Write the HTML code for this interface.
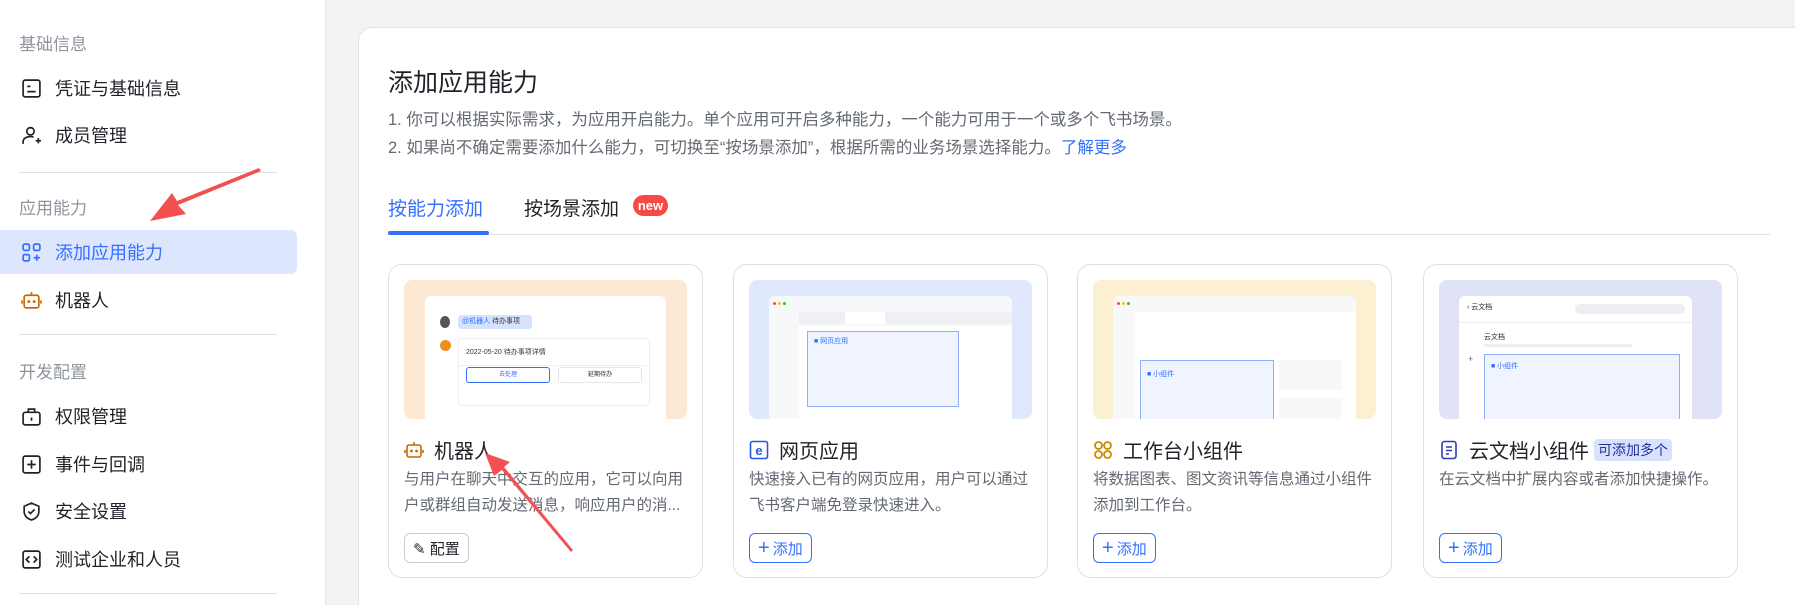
<!DOCTYPE html>
<html style="overflow:hidden;width:1795px;height:605px"><head><meta charset="utf-8"><style>
*{margin:0;padding:0;box-sizing:border-box}
body{width:1795px;height:605px;overflow:hidden;background:#f2f3f5;font-family:"Liberation Sans","Noto Sans CJK SC",sans-serif;position:relative;color:#1f2329}
.side{position:absolute;left:0;top:0;width:326px;height:605px;background:#fff;border-right:1px solid #e4e5e7}
.grp{position:absolute;left:19px;font-size:17px;color:#8f959e}
.item{position:absolute;left:0;width:297px;height:44px;display:flex;align-items:center;padding-left:21px;font-size:18px;color:#1f2329}
.item svg{width:21px;height:21px;margin-right:13px}
.item.act{background:#dde6fd;color:#3370ff;border-radius:0 6px 6px 0}
.div{position:absolute;left:19px;width:258px;height:1px;background:#dee0e3}
.main{position:absolute;left:358px;top:27px;width:1460px;height:600px;background:#fff;border:1px solid #e1e3e6;border-radius:14px}
.abs{position:absolute}
.card{position:absolute;top:264px;width:315px;height:314px;border:1px solid #dee0e3;border-radius:14px;background:#fff}
.img{position:absolute;left:15px;top:15px;width:283px;height:139px;border-radius:8px;overflow:hidden}
.ttl{position:absolute;left:15px;top:170px;font-size:20px;display:flex;align-items:center;white-space:nowrap}
.ttl svg{width:20px;height:20px;margin-right:10px}
.desc{position:absolute;left:15px;top:202px;width:286px;font-size:15.5px;line-height:25.5px;color:#646a73}
.btn{position:absolute;left:15px;top:268px;height:30px;padding:0 8px;border:1px solid #3370ff;border-radius:6px;color:#3370ff;font-size:15px;display:flex;align-items:center}
.btn b{font-weight:normal;font-size:20px;margin-right:3px;line-height:1}
.panel{position:absolute;background:#fff;border-radius:6px}
</style></head><body>
<div class="side">
<div class="grp" style="top:30px">基础信息</div>
<div class="item" style="top:66px"><svg viewBox="0 0 20 20" fill="none" stroke="#1f2329" stroke-width="1.6"><rect x="2" y="2" width="16" height="16" rx="2"/><path d="M6 8h3M6 13h8"/></svg>凭证与基础信息</div>
<div class="item" style="top:113px"><svg viewBox="0 0 20 20" fill="none" stroke="#1f2329" stroke-width="1.6"><circle cx="9" cy="6" r="3.5"/><path d="M2 18v-2c0-3 3-5 7-5 1 0 2 .2 3 .5M14 15h5M16.5 12.5v5"/></svg>成员管理</div>
<div class="div" style="top:172px"></div>
<div class="grp" style="top:194px">应用能力</div>
<div class="item act" style="top:230px"><svg viewBox="0 0 20 20" fill="none" stroke="#3370ff" stroke-width="1.6"><rect x="2" y="2" width="6" height="6" rx="1.5"/><rect x="12" y="2" width="6" height="6" rx="1.5"/><rect x="2" y="12" width="6" height="6" rx="1.5"/><path d="M12 15h6M15 12v6"/></svg>添加应用能力</div>
<div class="item" style="top:278px"><svg viewBox="0 0 20 20" fill="none" stroke="#c66a00" stroke-width="1.6"><rect x="3" y="5" width="14" height="12" rx="2"/><path d="M10 2v3M1 10v3M19 10v3"/><circle cx="7.5" cy="11" r=".6" fill="#c66a00"/><circle cx="12.5" cy="11" r=".6" fill="#c66a00"/></svg>机器人</div>
<div class="div" style="top:334px"></div>
<div class="grp" style="top:358px">开发配置</div>
<div class="item" style="top:394px"><svg viewBox="0 0 20 20" fill="none" stroke="#1f2329" stroke-width="1.6"><rect x="2" y="6" width="16" height="12" rx="2"/><path d="M7 6V3h6v3M10 11v3"/></svg>权限管理</div>
<div class="item" style="top:442px"><svg viewBox="0 0 20 20" fill="none" stroke="#1f2329" stroke-width="1.6"><rect x="2" y="2" width="16" height="16" rx="2"/><path d="M6 10h8M10 6v8"/></svg>事件与回调</div>
<div class="item" style="top:489px"><svg viewBox="0 0 20 20" fill="none" stroke="#1f2329" stroke-width="1.6"><path d="M10 2l7 3v5c0 4-3 7-7 8-4-1-7-4-7-8V5z"/><path d="M7 10l2 2 4-4"/></svg>安全设置</div>
<div class="item" style="top:537px"><svg viewBox="0 0 20 20" fill="none" stroke="#1f2329" stroke-width="1.6"><rect x="2" y="2" width="16" height="16" rx="2"/><path d="M8 7l-3 3 3 3M12 7l3 3-3 3"/></svg>测试企业和人员</div>
<div class="div" style="top:593px"></div>
</div>

<div class="main">
<div class="abs" style="left:29px;top:35px;font-size:25px">添加应用能力</div>
<div class="abs" style="left:29px;top:78px;font-size:16.5px;color:#646a73">1. 你可以根据实际需求，为应用开启能力。单个应用可开启多种能力，一个能力可用于一个或多个飞书场景。</div>
<div class="abs" style="left:29px;top:106px;font-size:16.5px;color:#646a73">2. 如果尚不确定需要添加什么能力，可切换至“按场景添加”，根据所需的业务场景选择能力。<span style="color:#3370ff">了解更多</span></div>
<div class="abs" style="left:29px;top:166px;font-size:19px;color:#3370ff">按能力添加</div>
<div class="abs" style="left:165px;top:166px;font-size:19px">按场景添加</div>
<div class="abs" style="left:274px;top:167px;width:35px;height:21px;background:#f54a45;color:#fff;border-radius:11px;font-size:13px;font-weight:bold;text-align:center;line-height:21px">new</div>
<div class="abs" style="left:29px;top:206px;width:1382px;height:1px;background:#dee0e3"></div>
<div class="abs" style="left:29px;top:203px;width:101px;height:4px;background:#3370ff;border-radius:2px"></div>
</div>

<!-- card 1 -->
<div class="card" style="left:388px">
<div class="img" style="background:#fde9d3">
<div class="panel" style="left:21px;top:16px;width:241px;height:130px;border-radius:6px 6px 0 0">
<div class="abs" style="left:15px;top:20px;width:10px;height:12px;border-radius:50%;background:#555"></div>
<div class="abs" style="left:33px;top:19px;width:74px;height:14px;background:#d5e2fb;border-radius:3px;font-size:7px;line-height:14px;padding-left:4px;color:#3370ff">@机器人 <span style="color:#333">待办事项</span></div>
<div class="abs" style="left:15px;top:44px;width:11px;height:11px;border-radius:50%;background:#f08c1a"></div>
<div class="abs" style="left:33px;top:42px;width:192px;height:68px;border:1px solid #eceef1;border-radius:4px">
<div style="font-size:7px;padding:8px 7px;color:#333;border-bottom:1px solid #eceef1">2022-05-20 待办事项详情</div>
<div class="abs" style="left:7px;top:28px;width:84px;height:16px;border:1px solid #3370ff;border-radius:3px;font-size:6px;color:#3370ff;text-align:center;line-height:14px">去处理</div>
<div class="abs" style="left:99px;top:28px;width:84px;height:16px;border:1px solid #e4e5e7;border-radius:3px;font-size:6px;text-align:center;line-height:14px">延期待办</div>
</div></div></div>
<div class="ttl"><svg viewBox="0 0 20 20" fill="none" stroke="#c66a00" stroke-width="1.6"><rect x="3" y="5" width="14" height="12" rx="2"/><path d="M10 2v3M1 10v3M19 10v3"/><circle cx="7.5" cy="11" r=".6" fill="#c66a00"/><circle cx="12.5" cy="11" r=".6" fill="#c66a00"/></svg>机器人</div>
<div class="desc">与用户在聊天中交互的应用，它可以向用户或群组自动发送消息，响应用户的消...</div>
<div class="btn" style="border-color:#c9cdd4;color:#1f2329">✎&nbsp;配置</div>
</div>

<!-- card 2 -->
<div class="card" style="left:733px">
<div class="img" style="background:#e0e8fd">
<div class="panel" style="left:20px;top:16px;width:243px;height:130px;background:#f7f8fa;border-radius:6px 6px 0 0">
<div class="abs" style="left:4px;top:6px;width:3px;height:3px;border-radius:50%;background:#f54a45"></div>
<div class="abs" style="left:9px;top:6px;width:3px;height:3px;border-radius:50%;background:#ffc60a"></div>
<div class="abs" style="left:14px;top:6px;width:3px;height:3px;border-radius:50%;background:#34c724"></div>
<div class="abs" style="left:30px;top:16px;width:213px;height:12px;background:#eef0f3"></div>
<div class="abs" style="left:76px;top:16px;width:40px;height:12px;background:#fff"></div>
<div class="abs" style="left:30px;top:30px;width:213px;height:100px;background:#fff"></div>
<div class="abs" style="left:38px;top:35px;width:152px;height:76px;border:1px solid #8fb0f7;background:#f0f4ff;font-size:7px;color:#3370ff;padding:4px 6px">■ 网页应用</div>
</div></div>
<div class="ttl"><svg viewBox="0 0 20 20"><rect x="1.5" y="1.5" width="17" height="17" rx="2" fill="none" stroke="#245bdb" stroke-width="1.6"/><text x="10" y="15" font-size="13" font-family="Liberation Sans" font-weight="bold" text-anchor="middle" fill="#245bdb">e</text></svg>网页应用</div>
<div class="desc">快速接入已有的网页应用，用户可以通过飞书客户端免登录快速进入。</div>
<div class="btn"><b>+</b>添加</div>
</div>

<!-- card 3 -->
<div class="card" style="left:1077px">
<div class="img" style="background:#fbf0d2">
<div class="panel" style="left:20px;top:16px;width:243px;height:130px;background:#f7f8fa;border-radius:6px 6px 0 0">
<div class="abs" style="left:4px;top:6px;width:3px;height:3px;border-radius:50%;background:#f54a45"></div>
<div class="abs" style="left:9px;top:6px;width:3px;height:3px;border-radius:50%;background:#ffc60a"></div>
<div class="abs" style="left:14px;top:6px;width:3px;height:3px;border-radius:50%;background:#34c724"></div>
<div class="abs" style="left:22px;top:16px;width:221px;height:114px;background:#fff"></div>
<div class="abs" style="left:27px;top:64px;width:134px;height:70px;border:1px solid #8fb0f7;background:#f0f4ff;font-size:7px;color:#3370ff;padding:8px 6px">■ 小组件</div>
<div class="abs" style="left:166px;top:64px;width:63px;height:30px;background:#f7f8fa"></div>
<div class="abs" style="left:166px;top:102px;width:63px;height:30px;background:#f7f8fa"></div>
</div></div>
<div class="ttl"><svg viewBox="0 0 20 20" fill="none" stroke="#c98c00" stroke-width="1.8"><circle cx="5.5" cy="5.5" r="3.5"/><circle cx="14.5" cy="5.5" r="3.5"/><circle cx="5.5" cy="14.5" r="3.5"/><circle cx="14.5" cy="14.5" r="3.5"/></svg>工作台小组件</div>
<div class="desc">将数据图表、图文资讯等信息通过小组件添加到工作台。</div>
<div class="btn"><b>+</b>添加</div>
</div>

<!-- card 4 -->
<div class="card" style="left:1423px">
<div class="img" style="background:#e0e2f8">
<div class="panel" style="left:20px;top:16px;width:233px;height:130px;border-radius:6px 6px 0 0">
<div class="abs" style="left:8px;top:6px;font-size:7px">‹ 云文档</div>
<div class="abs" style="left:116px;top:8px;width:110px;height:10px;background:#eceef1;border-radius:5px"></div>
<div class="abs" style="left:0;top:26px;width:233px;height:1px;background:#eceef1"></div>
<div class="abs" style="left:25px;top:36px;font-size:7px">云文档</div>
<div class="abs" style="left:25px;top:48px;width:148px;height:3px;background:#eceef1"></div>
<div class="abs" style="left:9px;top:58px;font-size:9px;color:#666">+</div>
<div class="abs" style="left:25px;top:58px;width:196px;height:73px;border:1px solid #8fb0f7;background:#f0f4ff;font-size:7px;color:#3370ff;padding:6px 6px">■ 小组件</div>
</div></div>
<div class="ttl"><svg viewBox="0 0 20 20" fill="none" stroke="#2a3ab8" stroke-width="1.6"><rect x="3" y="1.5" width="14" height="17" rx="2.5"/><path d="M7 7h6M7 10.5h6M7 14h3"/></svg>云文档小组件<span style="margin-left:5px;font-size:14px;background:#d8e2fd;color:#1f2f9e;padding:1px 4px;border-radius:4px">可添加多个</span></div>
<div class="desc">在云文档中扩展内容或者添加快捷操作。</div>
<div class="btn"><b>+</b>添加</div>
</div>

<svg class="abs" style="left:0;top:0" width="1795" height="605" viewBox="0 0 1795 605">
<path d="M261 171 L178 205 L186 214 L150 221 L172 193 L177 201 L259 168 Z" fill="#f25151"/>
<path d="M571 552 L502 470 L494 476 L485 453 L510 462 L504 467 L573 550 Z" fill="#f25151"/>
</svg>
</body></html>
